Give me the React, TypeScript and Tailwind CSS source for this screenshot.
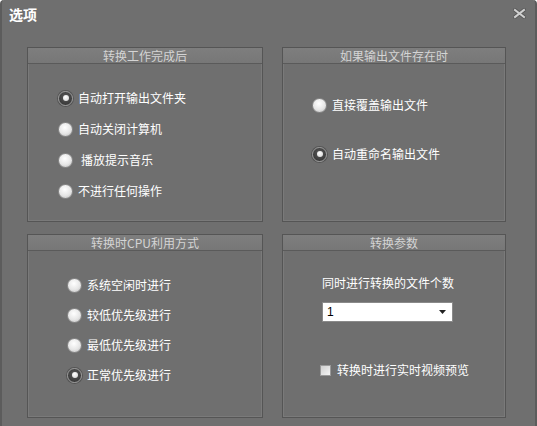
import React from 'react';

const font = { fontFamily: '"Noto Sans CJK SC", "Noto Sans", sans-serif' };

function Radio({ checked, label, gap = 'ml-[5px]' }: { checked?: boolean; label: string; gap?: string }) {
  return (
    <div className="flex items-center h-[16px]">
      {checked ? (
        <span className="w-[15px] h-[15px] rounded-full bg-[radial-gradient(circle_at_50%_40%,#5a5a5a,#2e2e2e)] border border-[#9a9a9a] flex items-center justify-center shadow-[0_0_0_1px_#555]">
          <span className="w-[6px] h-[6px] rounded-full bg-[radial-gradient(circle_at_40%_35%,#ffffff,#cfcfcf)]" />
        </span>
      ) : (
        <span className="w-[15px] h-[15px] rounded-full bg-[radial-gradient(circle_at_45%_35%,#ffffff,#e6e6e6_55%,#b9b9b9)] border border-[#8a8a8a]" />
      )}
      <span className={`${gap} text-[12px] text-white leading-none`}>{label}</span>
    </div>
  );
}

function Group({ title, children }: { title: string; children?: React.ReactNode }) {
  return (
    <div className="flex flex-col border border-[#555] shadow-[inset_0_0_0_1px_#7a7a7a] h-full">
      <div className="h-[16px] flex items-center justify-center bg-[linear-gradient(#7e7e7e,#777)] border-b border-[#5a5a5a] text-[12px] leading-none text-[#d4d4d4]">
        {title}
      </div>
      <div className="flex-1">{children}</div>
    </div>
  );
}

export default function App() {
  return (
    <div style={font} className="w-[537px] h-[426px] bg-[#6f6f6f] border-x-[2px] border-[#5c5c5c] rounded-t-[4px] flex flex-col overflow-hidden">
      <div className="h-[47px] flex items-start justify-between pl-[7px] pr-[9px] pt-[4px]">
        <span className="text-[14px] font-bold text-white">选项</span>
        <svg width="13" height="11" viewBox="0 0 13 11" className="mt-[4px]">
          <path d="M2 2 L11 9 M11 2 L2 9" stroke="#5a5a5a" strokeWidth="4" strokeLinecap="square" />
          <path d="M2 2 L11 9 M11 2 L2 9" stroke="#cfcfcf" strokeWidth="2" strokeLinecap="square" />
        </svg>
      </div>
      <div className="grid grid-cols-[236px_224px] grid-rows-[175px_184px] gap-x-[19px] gap-y-[12px] pl-[25px]">
        <Group title="转换工作完成后">
          <div className="flex flex-col gap-[15px] pl-[30px] pt-[26px]">
            <Radio checked label="自动打开输出文件夹" />
            <Radio label="自动关闭计算机" />
            <Radio label="播放提示音乐" gap="ml-[8px]" />
            <Radio label="不进行任何操作" />
          </div>
        </Group>
        <Group title="如果输出文件存在时">
          <div className="flex flex-col gap-[33px] pl-[29px] pt-[33px]">
            <Radio label="直接覆盖输出文件" />
            <Radio checked label="自动重命名输出文件" />
          </div>
        </Group>
        <Group title="转换时CPU利用方式">
          <div className="flex flex-col gap-[14px] pl-[39px] pt-[26px]">
            <Radio label="系统空闲时进行" />
            <Radio label="较低优先级进行" />
            <Radio label="最低优先级进行" />
            <Radio checked label="正常优先级进行" />
          </div>
        </Group>
        <Group title="转换参数">
          <div className="flex flex-col pl-[39px] pt-[26px]">
            <span className="text-[12px] text-white leading-none">同时进行转换的文件个数</span>
            <div className="mt-[13px] w-[131px] h-[20px] bg-white border border-[#8a8a8a] flex items-center justify-between pl-[4px] pr-[6px]">
              <span className="text-[12px] text-black leading-none" style={{ fontFamily: '"Liberation Sans", sans-serif' }}>1</span>
              <svg width="7" height="4" viewBox="0 0 7 4"><path d="M0 0 H7 L3.5 4 Z" fill="#222" /></svg>
            </div>
            <div className="flex items-center mt-[42px] ml-[-2px]">
              <span className="w-[11px] h-[11px] bg-[linear-gradient(135deg,#d0d0d0,#f4f4f4)] border border-[#9a9a9a]" />
              <span className="ml-[6px] text-[12px] text-white leading-none">转换时进行实时视频预览</span>
            </div>
          </div>
        </Group>
      </div>
    </div>
  );
}
